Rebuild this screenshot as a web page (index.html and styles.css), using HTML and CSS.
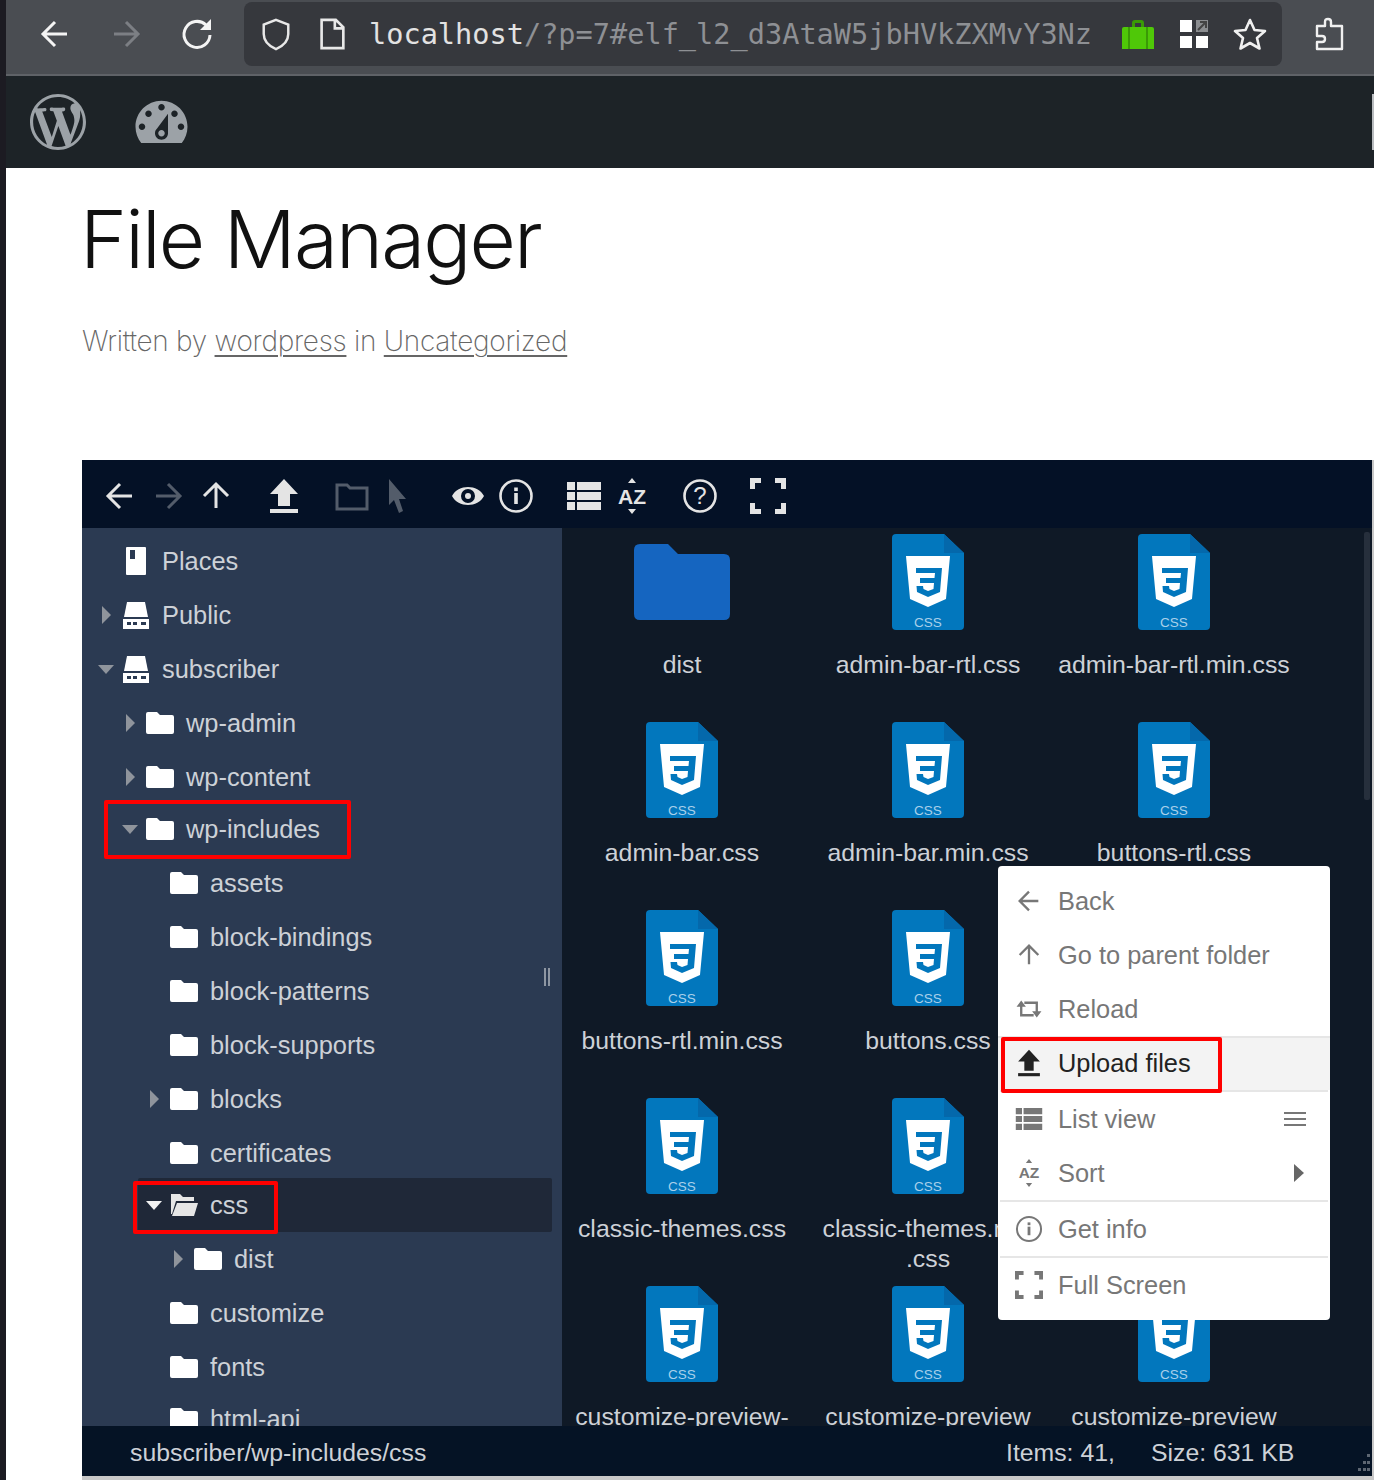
FILE: index.html
```html
<!DOCTYPE html>
<html lang="en"><head>
  <meta charset="UTF-8"><meta name="viewport" content="width=device-width, initial-scale=1.0">
  <title>File Manager</title>
  <link rel="stylesheet" href="styles.css">
</head><body>

<svg class="defs" width="0" height="0" aria-hidden="true">
  <symbol id="i-back" viewBox="0 0 36 36"><path d="M30 18H7M18 6L6 18l12 12" fill="none" stroke="currentColor" stroke-width="3"/></symbol>
  <symbol id="i-forward" viewBox="0 0 36 36"><path d="M6 18h23M18 6l12 12-12 12" fill="none" stroke="currentColor" stroke-width="3"/></symbol>
  <symbol id="i-up" viewBox="0 0 36 36"><path d="M18 30V7M6 18L18 6l12 12" fill="none" stroke="currentColor" stroke-width="3"/></symbol>
  <symbol id="i-upload" viewBox="0 0 36 36"><path d="M18 1l14 15h-8v12H12V16H4z" fill="currentColor"/><rect x="4" y="31" width="28" height="4" fill="currentColor"/></symbol>
  <symbol id="i-newfolder" viewBox="0 0 36 36"><path d="M3 7h10l3 3h17v21H3z" fill="none" stroke="currentColor" stroke-width="3"/></symbol>
  <symbol id="i-pointer" viewBox="0 0 36 36"><path d="M7 1l17 20h-7l4 12-4 2-5-13-5 5z" fill="currentColor"/></symbol>
  <symbol id="i-eye" viewBox="0 0 36 36"><path d="M2 18C8 6 28 6 34 18 28 30 8 30 2 18zM18 11a7 7 0 1 0 0 14 7 7 0 0 0 0-14zM18 15a3 3 0 1 1 0 6 3 3 0 0 1 0-6z" fill="currentColor" fill-rule="evenodd"/></symbol>
  <symbol id="i-info" viewBox="0 0 36 36"><circle cx="18" cy="18" r="15.5" fill="none" stroke="currentColor" stroke-width="2.6"/><rect x="16.2" y="15" width="3.6" height="11" fill="currentColor"/><rect x="16.2" y="9.5" width="3.6" height="3.6" fill="currentColor"/></symbol>
  <symbol id="i-list" viewBox="0 0 36 36"><path d="M1 4h8v8H1zM11 4h24v8H11zM1 14h8v8H1zM11 14h24v8H11zM1 24h8v8H1zM11 24h24v8H11z" fill="currentColor"/></symbol>
  <symbol id="i-carets" viewBox="0 0 36 36"><path d="M18 0l4 5h-8zM18 36l4-5h-8z" fill="currentColor"/></symbol>
  <symbol id="i-ring" viewBox="0 0 36 36"><circle cx="18" cy="18" r="15.5" fill="none" stroke="currentColor" stroke-width="2.6"/></symbol>
  <symbol id="i-full" viewBox="0 0 36 36"><path d="M2.500 11V2.500H11M25 2.500h8.500V11M33.500 25v8.500H25M11 33.500H2.500V25" fill="none" stroke="currentColor" stroke-width="5"/></symbol>
  <symbol id="i-reload" viewBox="0 0 36 36"><path d="M8 14v12h16M28 22V10H12" fill="none" stroke="currentColor" stroke-width="3"/><path d="M2 15h12L8 7zM22 21h12l-6 8z" fill="currentColor"/></symbol>

  <symbol id="i-book" viewBox="0 0 28 30"><path d="M4 2q0-1 1-1h18q1 0 1 1v26q0 1-1 1H5q-1 0-1-1z" fill="#fff"/><path d="M8 4h5v9H8z" fill="#2b3a52"/></symbol>
  <symbol id="i-hdd" viewBox="0 0 28 30"><path d="M5 2h18l3 15H2z" fill="#fff"/><path d="M1 19h26v10H1z" fill="#fff"/><path d="M5 22h4v3H5zM11 22h4v3h-4zM19 22h5v3h-5z" fill="#2b3a52"/></symbol>
  <symbol id="i-folder" viewBox="0 0 28 24"><path d="M2 1h9l3 3h12q2 0 2 2v15q0 2-2 2H2q-2 0-2-2V3q0-2 2-2z" fill="#fff"/></symbol>
  <symbol id="i-folder-open" viewBox="0 0 28 24"><path d="M1 1h9l3 3h11v4H6L2 21H1z" fill="#e6e6e6"/><path d="M7 10h21l-4 13H2z" fill="#e6e6e6"/></symbol>

  <symbol id="i-dir" viewBox="0 0 96 96"><path d="M6 10h28l10 10h46q6 0 6 6v54q0 6-6 6H6q-6 0-6-6V16q0-6 6-6z" fill="#1565c0"/></symbol>
  <symbol id="i-css" viewBox="0 0 72 96">
    <path d="M4 0h48l20 19v73q0 4-4 4H4q-4 0-4-4V4q0-4 4-4z" fill="#0277bd"/>
    <path d="M52 0l20 19H52z" fill="#0468ab"/>
    <path d="M14 22h44l-4 43-18 8-18-8z" fill="#fff"/>
    <path d="M24 34h26l-2 24-12 5-11-5-.5-6H31l.5 3 4.500 2 5.500-2 .5-6H28v-5h14.500l.5-5H24z" fill="#0277bd"/>
  </symbol>
</svg>

<div class="edge"></div>
<div class="window">

  <header class="browser-bar">
    <div class="nav-btns">
      <svg class="nav-ico"><use href="#i-back"/></svg>
      <svg class="nav-ico dim"><use href="#i-forward"/></svg>
      <svg class="nav-ico" viewBox="0 0 36 36"><path d="M27 9a13 13 0 1 0 4 10" fill="none" stroke="currentColor" stroke-width="3"/><path d="M32 3v11H21z" fill="currentColor"/></svg>
    </div>
    <div class="url-bar">
      <svg class="url-ico" viewBox="0 0 36 36"><path d="M18 3l13 5v10c0 8-6 13-13 16C11 31 5 26 5 18V8z" fill="none" stroke="currentColor" stroke-width="2.600"/></svg>
      <svg class="url-ico doc" viewBox="0 0 36 36"><path d="M7 3h15l8 8v22H7zM21 3v9h9" fill="none" stroke="currentColor" stroke-width="2.800"/></svg>
      <div class="url-text"><b>localhost</b>/?p=7#elf_l2_d3AtaW5jbHVkZXMvY3Nz</div>
      <svg class="url-ext bag" viewBox="0 0 34 30"><path d="M11 8V4q0-3 3-3h6q3 0 3 3v4h-3V4h-6v4z" fill="#3a9a06"/><path d="M1 10q0-2 2-2h28q2 0 2 2v20H1z" fill="#4fc808"/><path d="M7 8h2v22H7zM25 8h2v22h-2z" fill="#3a9a06"/></svg>
      <svg class="url-ext grid" viewBox="0 0 30 30"><path d="M1 1h12v12H1zM1 17h12v12H1zM17 17h12v12H17z" fill="#fff"/><path d="M17 1h12v12H17z" fill="#8b8d90"/><path d="M19 11l7-7M21 3h6v6" fill="none" stroke="#444" stroke-width="2"/></svg>
      <svg class="url-ext star" viewBox="0 0 34 32"><path d="M17 2l4.500 10 10.500 1-8 7 2.500 10.500L17 25 7.500 30.500 10 20l-8-7 10.500-1z" fill="none" stroke="#f0f0f0" stroke-width="2.600" stroke-linejoin="round"/></svg>
    </div>
    <svg class="puzzle" viewBox="0 0 30 34"><path d="M11 9V5q0-3 3-3t3 3v4h11v23H3v-7h5q3 0 3-3t-3-3H3V9z" fill="none" stroke="#f0f0f0" stroke-width="2.400" stroke-linejoin="round"/></svg>
  </header>

  <div class="wp-bar">
    <svg class="wp-logo" viewBox="0 0 20 20"><path fill="currentColor" d="M20 10c0-5.510-4.490-10-10-10C4.480 0 0 4.490 0 10c0 5.520 4.480 10 10 10 5.510 0 10-4.480 10-10zM7.780 15.370L4.370 6.220c.55-.02 1.170-.08 1.170-.08.5-.06.44-1.130-.06-1.110 0 0-1.450.11-2.370.11-.18 0-.37 0-.58-.01C4.120 2.690 6.870 1.110 10 1.110c2.330 0 4.450.87 6.050 2.340-.68-.11-1.650.39-1.650 1.580 0 .74.45 1.360.9 2.100.35.61.55 1.360.55 2.460 0 1.490-1.400 5-1.400 5l-3.030-8.370c.54-.02.82-.17.82-.17.5-.05.44-1.250-.06-1.220 0 0-1.440.12-2.380.12-.87 0-2.330-.12-2.330-.12-.5-.03-.56 1.200-.06 1.220l.92.08 1.260 3.410zM17.410 10c.24-.64.74-1.870.43-4.250.7 1.290 1.050 2.710 1.050 4.250 0 3.290-1.730 6.240-4.400 7.780.97-2.590 1.940-5.200 2.920-7.780zM6.100 18.090C3.120 16.650 1.110 13.530 1.110 10c0-1.300.23-2.480.72-3.590C3.250 10.300 4.670 14.200 6.100 18.090zm4.030-6.630l2.580 6.980c-.86.29-1.760.45-2.710.45-.79 0-1.570-.11-2.290-.33.81-2.380 1.620-4.740 2.420-7.100z"/></svg>
    <svg class="wp-dash" viewBox="0 0 20 20"><path fill="currentColor" d="M3.760 16h12.480c1.100-1.370 1.760-3.110 1.760-5 0-4.420-3.580-8-8-8s-8 3.580-8 8c0 1.890.66 3.630 1.760 5zM10 4c.55 0 1 .45 1 1s-.45 1-1 1-1-.45-1-1 .45-1 1-1zM6 6c.55 0 1 .45 1 1s-.45 1-1 1-1-.45-1-1 .45-1 1-1zm8 0c.55 0 1 .45 1 1s-.45 1-1 1-1-.45-1-1 .45-1 1-1zm-5.370 5.550L12 7v6c0 1.100-.9 2-2 2s-2-.9-2-2c0-.57.24-1.080.63-1.450zM4 10c.55 0 1 .45 1 1s-.45 1-1 1-1-.45-1-1 .45-1 1-1zm12 0c.55 0 1 .45 1 1s-.45 1-1 1-1-.45-1-1 .45-1 1-1zm-5 3c0-.55-.45-1-1-1s-1 .45-1 1 .45 1 1 1 1-.45 1-1z"/></svg>
    <div class="wp-sliver"></div>
  </div>

  <main class="article">
    <h1>File Manager</h1>
    <p class="meta">Written by <a>wordpress</a> in <a>Uncategorized</a></p>

    <section class="fm">
      <div class="fm-toolbar">
        <div class="tool-group">
          <svg class="tool"><use href="#i-back"/></svg>
          <svg class="tool off"><use href="#i-forward"/></svg>
          <svg class="tool"><use href="#i-up"/></svg>
        </div>
        <div class="tool-group"><svg class="tool"><use href="#i-upload"/></svg></div>
        <div class="tool-group">
          <svg class="tool off"><use href="#i-newfolder"/></svg>
          <svg class="tool off"><use href="#i-pointer"/></svg>
        </div>
        <div class="tool-group">
          <svg class="tool"><use href="#i-eye"/></svg>
          <svg class="tool"><use href="#i-info"/></svg>
        </div>
        <div class="tool-group">
          <svg class="tool"><use href="#i-list"/></svg>
          <svg class="tool" viewBox="0 0 36 36"><use href="#i-carets" width="36" height="36"/><text x="18" y="26" class="svg-label">AZ</text></svg>
        </div>
        <div class="tool-group"><svg class="tool" viewBox="0 0 36 36"><use href="#i-ring" width="36" height="36"/><text x="18" y="26" class="svg-label svg-q">?</text></svg></div>
        <div class="tool-group"><svg class="tool"><use href="#i-full"/></svg></div>
      </div>

      <div class="fm-body">
        <nav class="tree">
          <div class="tree-row lvl-0"><span class="arrow"></span><svg class="t-ico tall"><use href="#i-book"/></svg><span>Places</span></div>
          <div class="tree-row lvl-0"><span class="arrow closed"></span><svg class="t-ico tall"><use href="#i-hdd"/></svg><span>Public</span></div>
          <div class="tree-row lvl-0"><span class="arrow open"></span><svg class="t-ico tall"><use href="#i-hdd"/></svg><span>subscriber</span></div>
          <div class="tree-row lvl-1"><span class="arrow closed"></span><svg class="t-ico"><use href="#i-folder"/></svg><span>wp-admin</span></div>
          <div class="tree-row lvl-1"><span class="arrow closed"></span><svg class="t-ico"><use href="#i-folder"/></svg><span>wp-content</span></div>
          <div class="tree-row lvl-1 tight"><span class="arrow open"></span><svg class="t-ico"><use href="#i-folder"/></svg><span>wp-includes</span><i class="mark mark-includes"></i></div>
          <div class="tree-row lvl-2"><span class="arrow"></span><svg class="t-ico"><use href="#i-folder"/></svg><span>assets</span></div>
          <div class="tree-row lvl-2"><span class="arrow"></span><svg class="t-ico"><use href="#i-folder"/></svg><span>block-bindings</span></div>
          <div class="tree-row lvl-2"><span class="arrow"></span><svg class="t-ico"><use href="#i-folder"/></svg><span>block-patterns</span></div>
          <div class="tree-row lvl-2"><span class="arrow"></span><svg class="t-ico"><use href="#i-folder"/></svg><span>block-supports</span></div>
          <div class="tree-row lvl-2"><span class="arrow closed"></span><svg class="t-ico"><use href="#i-folder"/></svg><span>blocks</span></div>
          <div class="tree-row lvl-2"><span class="arrow"></span><svg class="t-ico"><use href="#i-folder"/></svg><span>certificates</span></div>
          <div class="tree-row lvl-2 tight active"><span class="arrow open"></span><svg class="t-ico"><use href="#i-folder-open"/></svg><span>css</span><i class="mark mark-css"></i></div>
          <div class="tree-row lvl-3"><span class="arrow closed"></span><svg class="t-ico"><use href="#i-folder"/></svg><span>dist</span></div>
          <div class="tree-row lvl-2"><span class="arrow"></span><svg class="t-ico"><use href="#i-folder"/></svg><span>customize</span></div>
          <div class="tree-row lvl-2"><span class="arrow"></span><svg class="t-ico"><use href="#i-folder"/></svg><span>fonts</span></div>
          <div class="tree-row lvl-2 tight"><span class="arrow"></span><svg class="t-ico"><use href="#i-folder"/></svg><span>html-api</span></div>
          <div class="splitter"></div>
        </nav>

        <div class="files">
          <div class="file-grid">
            <div class="file"><svg class="dir-ico"><use href="#i-dir"/></svg><div class="name">dist</div></div>
            <div class="file"><svg class="css-ico" viewBox="0 0 72 96"><use href="#i-css" width="72" height="96"/><text x="36" y="93" class="css-tag">CSS</text></svg><div class="name">admin-bar-rtl.css</div></div>
            <div class="file"><svg class="css-ico" viewBox="0 0 72 96"><use href="#i-css" width="72" height="96"/><text x="36" y="93" class="css-tag">CSS</text></svg><div class="name">admin-bar-rtl.min.css</div></div>
            <div class="file"><svg class="css-ico" viewBox="0 0 72 96"><use href="#i-css" width="72" height="96"/><text x="36" y="93" class="css-tag">CSS</text></svg><div class="name">admin-bar.css</div></div>
            <div class="file"><svg class="css-ico" viewBox="0 0 72 96"><use href="#i-css" width="72" height="96"/><text x="36" y="93" class="css-tag">CSS</text></svg><div class="name">admin-bar.min.css</div></div>
            <div class="file"><svg class="css-ico" viewBox="0 0 72 96"><use href="#i-css" width="72" height="96"/><text x="36" y="93" class="css-tag">CSS</text></svg><div class="name">buttons-rtl.css</div></div>
            <div class="file"><svg class="css-ico" viewBox="0 0 72 96"><use href="#i-css" width="72" height="96"/><text x="36" y="93" class="css-tag">CSS</text></svg><div class="name">buttons-rtl.min.css</div></div>
            <div class="file"><svg class="css-ico" viewBox="0 0 72 96"><use href="#i-css" width="72" height="96"/><text x="36" y="93" class="css-tag">CSS</text></svg><div class="name">buttons.css</div></div>
            <div class="file"></div>
            <div class="file"><svg class="css-ico" viewBox="0 0 72 96"><use href="#i-css" width="72" height="96"/><text x="36" y="93" class="css-tag">CSS</text></svg><div class="name">classic-themes.css</div></div>
            <div class="file"><svg class="css-ico" viewBox="0 0 72 96"><use href="#i-css" width="72" height="96"/><text x="36" y="93" class="css-tag">CSS</text></svg><div class="name">classic-themes.min<br>.css</div></div>
            <div class="file"></div>
            <div class="file"><svg class="css-ico" viewBox="0 0 72 96"><use href="#i-css" width="72" height="96"/><text x="36" y="93" class="css-tag">CSS</text></svg><div class="name">customize-preview-</div></div>
            <div class="file"><svg class="css-ico" viewBox="0 0 72 96"><use href="#i-css" width="72" height="96"/><text x="36" y="93" class="css-tag">CSS</text></svg><div class="name">customize-preview</div></div>
            <div class="file"><svg class="css-ico" viewBox="0 0 72 96"><use href="#i-css" width="72" height="96"/><text x="36" y="93" class="css-tag">CSS</text></svg><div class="name">customize-preview</div></div>
          </div>
          <div class="scroll-thumb"></div>
        </div>
      </div>

      <footer class="fm-status">
        <span class="path">subscriber/wp-includes/css</span>
        <span class="items">Items: 41,</span>
        <span class="size">Size: 631 KB</span>
        <svg class="grip" viewBox="0 0 12 22"><path d="M9 2h3v3H9zM9 9h3v3H9zM5 9h3v3H5zM9 16h3v3H9zM5 16h3v3H5zM0 16h3v3H0z" fill="#5d6672"/></svg>
      </footer>

      <div class="ctx-menu">
        <div class="ctx-item"><svg class="ctx-ico"><use href="#i-back"/></svg>Back</div>
        <div class="ctx-item"><svg class="ctx-ico"><use href="#i-up"/></svg>Go to parent folder</div>
        <div class="ctx-item"><svg class="ctx-ico"><use href="#i-reload"/></svg>Reload</div>
        <div class="ctx-item hover"><svg class="ctx-ico"><use href="#i-upload"/></svg>Upload files<i class="mark mark-upload"></i></div>
        <div class="ctx-sep"></div>
        <div class="ctx-item"><svg class="ctx-ico"><use href="#i-list"/></svg>List view<span class="burger"></span></div>
        <div class="ctx-item"><svg class="ctx-ico"><use href="#i-carets"/></svg><span class="ctx-sort">AZ</span>Sort<span class="sub-arrow"></span></div>
        <div class="ctx-sep"></div>
        <div class="ctx-item"><svg class="ctx-ico"><use href="#i-info"/></svg>Get info</div>
        <div class="ctx-sep"></div>
        <div class="ctx-item"><svg class="ctx-ico"><use href="#i-full"/></svg>Full Screen</div>
      </div>
    </section>
  </main>
</div>

</body></html>
```

FILE: styles.css
```css
html,body{margin:0;padding:0;}
body{width:1374px;height:1480px;overflow:hidden;display:flex;background:#fff;font-family:'Liberation Sans',Arial,sans-serif;}
.defs{position:absolute;}
.edge{width:6px;flex:none;background:#1c1b22;}
.window{flex:1;min-width:0;display:flex;flex-direction:column;}

/* browser chrome */
.browser-bar{height:72px;flex:none;display:flex;align-items:flex-start;background:#4a4d52;border-bottom:2px solid #5f6267;padding-top:2px;}
.nav-btns{display:flex;gap:35px;margin:14px 0 0 31px;width:207px;color:#f4f4f4;}
.nav-ico{width:36px;height:36px;}
.nav-ico.dim{color:#7c7f84;}
.url-bar{width:1038px;height:64px;flex:none;display:flex;align-items:center;background:#36383d;border-radius:8px;color:#e8e8e8;}
.url-ico{width:34px;height:34px;flex:none;margin-left:15px;}
.url-ico.doc{margin-left:22px;}
.url-text{font-family:'DejaVu Sans Mono',monospace;font-size:28.6px;color:#8e9094;margin-left:20px;white-space:nowrap;width:752px;flex:none;}
.url-text b{font-weight:normal;color:#e2e2e2;}
.url-ext{flex:none;}
.bag{width:34px;height:30px;}
.grid{width:30px;height:30px;margin-left:24px;}
.star{width:34px;height:32px;margin-left:24px;}
.puzzle{width:30px;height:34px;margin:15px 0 0 32px;}

.wp-bar{height:92px;flex:none;background:#1d2327;display:flex;align-items:center;color:#9ca2a7;}
.wp-logo{width:56px;height:56px;margin-left:24px;}
.wp-dash{width:65px;height:65px;margin:3px 0 0 43px;}
.wp-sliver{width:2px;height:56px;background:#b9bcbf;margin-left:auto;}

/* post */
.article{flex:1;padding-left:76px;position:relative;min-height:0;}
h1{font-family:Inter,sans-serif;font-weight:300;font-size:80px;line-height:96px;letter-spacing:-1.9px;color:#111;margin:23px 0 0 -2px;}
.meta{font-family:Inter,sans-serif;font-weight:200;font-size:28px;line-height:40px;letter-spacing:-.28px;color:#666;margin:34px 0 0;}
.meta a{text-decoration:underline;text-underline-offset:4px;text-decoration-thickness:2px;}

/* file manager */
.fm{position:relative;margin-top:99px;width:1292px;height:1020px;box-sizing:border-box;border-right:2px solid #c8c8c8;border-bottom:4px solid #c8c8c8;display:flex;flex-direction:column;font-size:25.4px;color:#cdd1d7;}
.fm-toolbar{height:68px;flex:none;box-sizing:border-box;padding:4px 0 0 14px;background:#041126;display:flex;gap:20px;align-items:center;color:#e4e4e4;}
.tool-group{display:flex;}
.tool{width:48px;height:36px;}
.tool.off{color:#535c6a;}

.fm-body{flex:1;min-height:0;display:flex;}
.tree{width:480px;flex:none;background:#2b3a52;padding-top:6px;box-sizing:border-box;overflow:hidden;position:relative;}
.tree-row{height:54px;display:flex;align-items:center;margin-right:10px;position:relative;}
.tree-row.tight{margin-top:-2px;}
.lvl-0{padding-left:16px;}
.lvl-1{padding-left:40px;}
.lvl-2{padding-left:64px;}
.lvl-3{padding-left:88px;}
.tree-row.active{margin-left:56px;padding-left:8px;background:#1f2838;border-radius:2px;}
.arrow{width:16px;height:16px;margin-right:8px;flex:none;position:relative;}
.arrow.closed::before,.arrow.open::before{content:"";position:absolute;width:0;height:0;}
.arrow.closed::before{left:4px;top:-1px;border-left:9px solid #8f949c;border-top:9px solid transparent;border-bottom:9px solid transparent;}
.arrow.open::before{left:0;top:4px;border-top:9px solid #8f949c;border-left:8px solid transparent;border-right:8px solid transparent;}
.active .arrow.open::before{border-top-color:#f2f2f2;}
.t-ico{width:28px;height:24px;flex:none;margin-right:12px;}
.t-ico.tall{height:30px;}
.mark{position:absolute;display:block;box-sizing:border-box;border:4px solid #f00;border-radius:2px;}
.mark-includes{left:22px;top:-2px;width:247px;height:59px;}
.mark-css{left:-5px;top:3px;width:145px;height:53px;}
.mark-upload{left:3px;top:1px;width:221px;height:56px;}
.splitter{position:absolute;left:462px;top:440px;width:2px;height:18px;border-left:2px solid #8e96a2;border-right:2px solid #8e96a2;}

.files{flex:1;background:#0f1926;position:relative;overflow:hidden;padding-top:6px;font-size:24.8px;}
.file-grid{display:grid;grid-template-columns:repeat(3,240px);column-gap:6px;grid-auto-rows:188px;}
.file{text-align:center;}
.css-ico{width:72px;height:96px;display:block;margin:0 auto 20px;}
.dir-ico{width:96px;height:96px;display:block;margin:0 auto 20px;}
.name{line-height:30px;white-space:nowrap;}
.svg-label{font-family:'Liberation Sans',sans-serif;font-weight:bold;font-size:21px;text-anchor:middle;fill:currentColor;}
.svg-q{font-size:24px;font-weight:normal;}
.css-tag{font-family:'Liberation Sans',sans-serif;font-size:13.5px;text-anchor:middle;fill:#a9d0ea;}
.scroll-thumb{position:absolute;right:2px;top:4px;width:6px;height:268px;background:#262f3c;border-radius:2px;}

.fm-status{height:50px;flex:none;box-sizing:border-box;padding-top:4px;background:#051325;display:flex;align-items:center;position:relative;font-size:24.8px;}
.fm-status .path{margin-left:48px;width:876px;}
.fm-status .items{width:145px;}
.grip{position:absolute;right:2px;bottom:2px;width:12px;height:22px;}

/* context menu */
.ctx-menu{position:absolute;left:916px;top:406px;width:332px;box-sizing:border-box;padding:8px 0;background:#fff;border-radius:4px;color:#777;}
.ctx-item{height:54px;display:flex;align-items:center;padding-left:17px;position:relative;}
.ctx-ico{width:28px;height:28px;flex:none;margin-right:15px;}
.ctx-sort{position:absolute;left:17px;width:28px;text-align:center;font-size:15.5px;font-weight:bold;}
.ctx-item.hover{background:#f3f3f3;color:#222;box-shadow:inset 0 2px #e6e6e6;}
.ctx-sep{height:2px;margin:0 2px;background:#e6e6e6;}
.burger{position:absolute;right:24px;top:20px;width:22px;height:2px;background:#777;box-shadow:0 6px #777,0 12px #777;}
.sub-arrow{position:absolute;right:26px;top:18px;width:0;height:0;border-left:10px solid #666;border-top:9px solid transparent;border-bottom:9px solid transparent;}
```
